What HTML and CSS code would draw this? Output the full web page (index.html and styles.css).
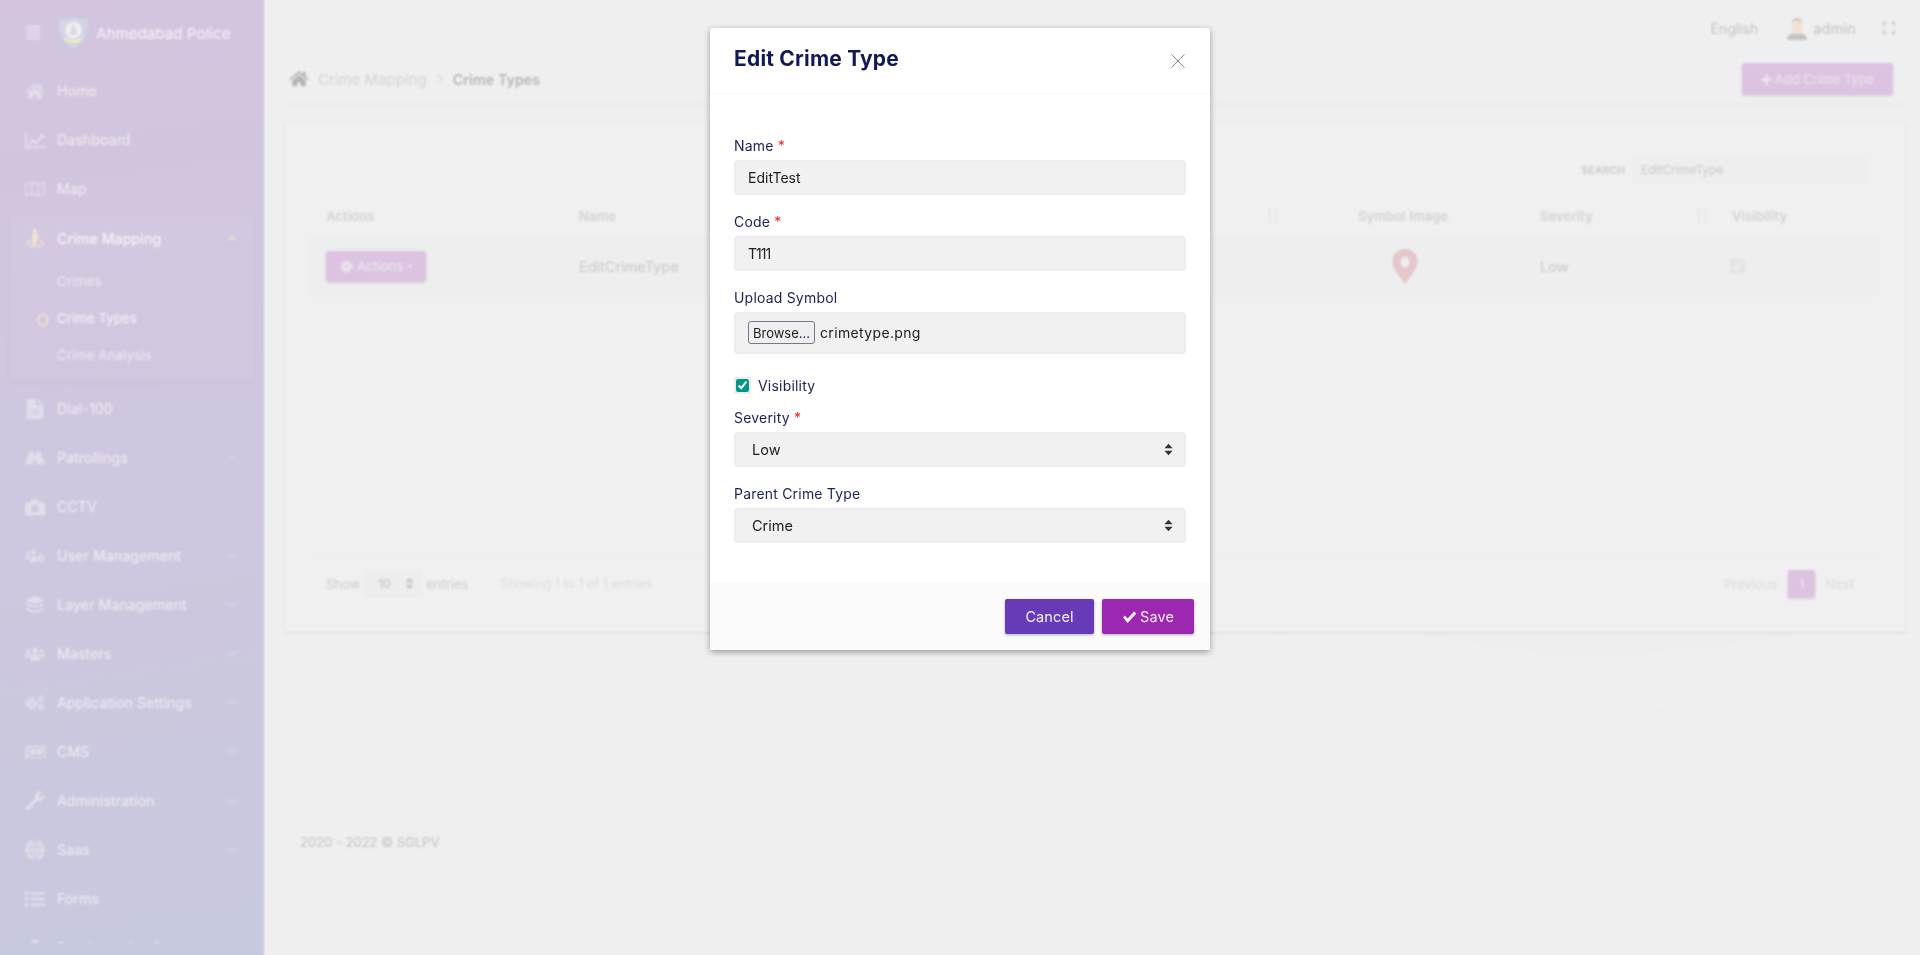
FILE: index.html
```html
<!DOCTYPE html>
<html lang="en">
<head>
<meta charset="utf-8">
<title>Crime Types</title>
<link rel="stylesheet" href="styles.css">
</head>
<body>
<svg class="defs" width="0" height="0" aria-hidden="true">
  <symbol id="i-home" viewBox="0 0 24 20"><path d="M.6 10.6 12 1l4.6 3.9V2h3.2v5.6l3.6 3-1.3 1.6L12 4 1.900 12.200z"/><path d="M4 12.300 12 5.700l8 6.600V19.400h-5.800v-5h-4.400v5H4z"/></symbol>
  <symbol id="i-chart" viewBox="0 0 24 20"><path d="M0 1h2v16.500h22V20H0z"/><path d="M4 14.500 9 8.500l4 3.500 6-7-2-2h6v6l-2-2-8 9-4-3.500-3.500 4z"/></symbol>
  <symbol id="i-map" viewBox="0 0 27 20"><path d="M1 3.500 9 1l9 2.500L26 1v15.500L18 19l-9-2.500L1 19z" fill="none" stroke="currentColor" stroke-width="1.800"/><path d="M9 1v15.500M18 3.500V19" stroke="currentColor" stroke-width="1.800"/></symbol>
  <symbol id="i-street" viewBox="0 0 24 22"><circle cx="12" cy="2.800" r="2.800"/><path d="M8.500 7a2 2 0 0 1 2-1.500h3a2 2 0 0 1 2 1.500v6h-1.500v6h-5v-6H8.500z"/><path d="M7 13.500C3 14.300 1 15.800 1 17.500 1 20 6 22 12 22s11-2 11-4.500c0-1.700-2-3.200-6-4v1.600c2.500.6 4 1.400 4 2.400 0 1.500-4 2.800-9 2.800s-9-1.300-9-2.800c0-1 1.500-1.800 4-2.400z"/></symbol>
  <symbol id="i-file" viewBox="0 0 18 22"><path d="M0 0h10v7h8v15H0zM12 0l6 5h-6z"/><path d="M4 11h10M4 14h10M4 17h10" stroke="#d0c8de" stroke-width="1"/></symbol>
  <symbol id="i-road" viewBox="0 0 27 17"><path d="M6 0h5.800l-.4 4h4.200l-.4-4H21l6 17H15.800l-.3-5h-4l-.3 5H0z"/></symbol>
  <symbol id="i-camera" viewBox="0 0 24 20"><path fill-rule="evenodd" d="M0 5h6.500L8.500 1h7l2 4H24v15H0zM12 7.500a4.500 4.500 0 1 0 0 9 4.500 4.500 0 0 0 0-9z"/></symbol>
  <symbol id="i-ucog" viewBox="0 0 30 20"><circle cx="5" cy="6" r="2.800"/><circle cx="13" cy="4.500" r="3.800"/><path d="M0 14c0-3 2-4.500 5-4.500 1 0 2 .2 2.500.6C6.500 11 6 12 6 14zM7 17c0-5 2.500-7.500 6-7.500 2 0 3.500.6 4.500 2v7.500H7z"/><circle cx="23.500" cy="13.500" r="3.200" fill="none" stroke="currentColor" stroke-width="2.600"/><circle cx="23.500" cy="13.500" r="5.300" fill="none" stroke="currentColor" stroke-width="2" stroke-dasharray="2.600 2.600"/></symbol>
  <symbol id="i-layers" viewBox="0 0 24 22"><path d="M12 0 24 5 12 10 0 5z"/><path d="m0 10 3-1.300 9 3.800 9-3.800 3 1.300-12 5z"/><path d="m0 16 3-1.300 9 3.800 9-3.800 3 1.300-12 5z"/></symbol>
  <symbol id="i-users" viewBox="0 0 30 20"><circle cx="15" cy="5" r="4.500"/><circle cx="5" cy="6" r="3"/><circle cx="25" cy="6" r="3"/><path d="M8 20v-4.500C8 12 10.500 10.500 15 10.500s7 1.500 7 5V20z"/><path d="M0 15v-2c0-2 2-3.200 5-3.200 1.500 0 2.500.3 3.500 1C7 12 6.500 13.200 6.500 15zM30 15v-2c0-2-2-3.200-5-3.200-1.500 0-2.500.3-3.500 1 1.500 1.200 2 2.400 2 4.200z"/></symbol>
  <symbol id="i-cogs" viewBox="0 0 30 22"><circle cx="10" cy="11.500" r="4.500" fill="none" stroke="currentColor" stroke-width="4"/><circle cx="10" cy="11.500" r="8.500" fill="none" stroke="currentColor" stroke-width="3" stroke-dasharray="3.340 3.340"/><circle cx="24" cy="5" r="2.200" fill="none" stroke="currentColor" stroke-width="2"/><circle cx="24" cy="5" r="4" fill="none" stroke="currentColor" stroke-width="1.800" stroke-dasharray="2.100 2.100"/><circle cx="24" cy="17" r="2.200" fill="none" stroke="currentColor" stroke-width="2"/><circle cx="24" cy="17" r="4" fill="none" stroke="currentColor" stroke-width="1.800" stroke-dasharray="2.100 2.100"/></symbol>
  <symbol id="i-news" viewBox="0 0 27 17"><path fill-rule="evenodd" d="M0 3h3V0h24v17H0zM1.500 4.500v11h1.500v-11zM5 2v13.500h20.500V2z"/><path d="M7 4h7.500v8H7zM16 4h7.500v8H16z"/></symbol>
  <symbol id="i-wrench" viewBox="0 0 24 24"><path d="M23.500 6c0 3.600-2.900 6.500-6.500 6.500-.9 0-1.700-.2-2.500-.5L5 22.500a2.500 2.500 0 0 1-3.500-3.500L12 9.500c-.3-.8-.5-1.600-.5-2.500C11.500 3.400 14.400.5 18 .5c1 0 1.800.2 2.600.6L16.500 5l1 2.500 2.500.5 3.200-3.800c.2.500.300 1.200.300 1.800z"/></symbol>
  <symbol id="i-globe" viewBox="0 0 24 24"><circle cx="12" cy="12" r="12"/><path d="M0 8.300h24M0 15.700h24M12 0v24M12 0C5 6 5 18 12 24M12 0c7 6 7 18 0 24" fill="none" stroke="#cac8de" stroke-width="1.300"/></symbol>
  <symbol id="i-list" viewBox="0 0 24 20"><path d="M0 1h4v4H0zM0 8h4v4H0zM0 15h4v4H0zM7 1.500h17v3H7zM7 8.500h17v3H7zM7 15.500h17v3H7z"/></symbol>
  <symbol id="i-puzzle" viewBox="0 0 24 20"><path d="M0 6h8c-1-1-1-6 4-6s5 5 4 6h8v14H0z"/></symbol>
  <symbol id="i-down" viewBox="0 0 12 8"><path d="m1 1.500 5 4.500 5-4.500" fill="none" stroke="currentColor" stroke-width="1.300"/></symbol>
  <symbol id="i-up" viewBox="0 0 12 8"><path d="m1 6.500 5-4.500 5 4.500" fill="none" stroke="currentColor" stroke-width="2"/></symbol>
  <symbol id="i-updown" viewBox="0 0 10 13"><path d="M5 0 9.500 5H.5zM5 13 .5 8h9z"/></symbol>
  <symbol id="i-sort" viewBox="0 0 12 16"><path d="M3 16V1M3 1 .8 3.500M9 0v15M9 15l2.200-2.500" fill="none" stroke="currentColor" stroke-width="1"/></symbol>
  <symbol id="i-gear" viewBox="0 0 20 20"><circle cx="10" cy="10" r="4.500" fill="none" stroke="currentColor" stroke-width="4"/><circle cx="10" cy="10" r="8.300" fill="none" stroke="currentColor" stroke-width="3" stroke-dasharray="3.260 3.260"/></symbol>
  <symbol id="i-plus" viewBox="0 0 12 12"><path d="M4.500 0h3v4.500H12v3H7.500V12h-3V7.500H0v-3h4.500z"/></symbol>
</svg>

<div class="app">
  <aside class="sidebar">
    <div class="brand">
      <span class="burger"><i></i><i></i><i></i><i></i><i></i></span>
      <svg class="logo" viewBox="0 0 32 34" aria-hidden="true">
        <path d="M16 1C11 3 6 3.500 1.500 3c-.5 10-.5 20 14.500 30C30.500 23 31 13 30.500 3 26 3.500 21 3 16 1z" fill="#d8d3e2" stroke="#c2d8ea" stroke-width="1.200"/>
        <circle cx="16" cy="14" r="8.500" fill="#f0eef4"/>
        <path d="M16 7l2.500 5 1.500 7h-8l1.500-7z" fill="#dcd8e3"/>
        <path d="M6 21c4 4 16 4 20 0l-1 4c-5 3-13 3-18 0z" fill="#f0ecc4"/>
      </svg>
      <span class="brand-name">Ahmedabad Police</span>
    </div>
    <nav class="nav">
      <a class="nav-item"><svg class="nav-ic"><use href="#i-home"/></svg><span>Home</span></a>
      <a class="nav-item"><svg class="nav-ic"><use href="#i-chart"/></svg><span>Dashboard</span></a>
      <a class="nav-item"><svg class="nav-ic"><use href="#i-map"/></svg><span>Map</span></a>
      <div class="nav-group">
        <a class="nav-item active"><svg class="nav-ic"><use href="#i-street"/></svg><span>Crime Mapping</span><svg class="chev"><use href="#i-up"/></svg></a>
        <div class="sub">
          <a class="sub-item">Crimes</a>
          <a class="sub-item current">Crime Types</a>
          <a class="sub-item">Crime Analysis</a>
        </div>
      </div>
      <a class="nav-item"><svg class="nav-ic"><use href="#i-file"/></svg><span>Dial-100</span></a>
      <a class="nav-item"><svg class="nav-ic"><use href="#i-road"/></svg><span>Patrollings</span><svg class="chev"><use href="#i-down"/></svg></a>
      <a class="nav-item"><svg class="nav-ic"><use href="#i-camera"/></svg><span>CCTV</span></a>
      <a class="nav-item"><svg class="nav-ic"><use href="#i-ucog"/></svg><span>User Management</span><svg class="chev"><use href="#i-down"/></svg></a>
      <a class="nav-item"><svg class="nav-ic"><use href="#i-layers"/></svg><span>Layer Management</span><svg class="chev"><use href="#i-down"/></svg></a>
      <a class="nav-item"><svg class="nav-ic"><use href="#i-users"/></svg><span>Masters</span><svg class="chev"><use href="#i-down"/></svg></a>
      <a class="nav-item"><svg class="nav-ic"><use href="#i-cogs"/></svg><span>Application Settings</span><svg class="chev"><use href="#i-down"/></svg></a>
      <a class="nav-item"><svg class="nav-ic"><use href="#i-news"/></svg><span>CMS</span><svg class="chev"><use href="#i-down"/></svg></a>
      <a class="nav-item"><svg class="nav-ic"><use href="#i-wrench"/></svg><span>Administration</span><svg class="chev"><use href="#i-down"/></svg></a>
      <a class="nav-item"><svg class="nav-ic"><use href="#i-globe"/></svg><span>Saas</span><svg class="chev"><use href="#i-down"/></svg></a>
      <a class="nav-item"><svg class="nav-ic"><use href="#i-list"/></svg><span>Forms</span></a>
      <a class="nav-item"><svg class="nav-ic"><use href="#i-puzzle"/></svg><span>Database Configurator</span></a>
    </nav>
  </aside>

  <main class="main">
    <svg class="swoosh" viewBox="0 0 680 140" aria-hidden="true">
      <path d="M180 0C260 18 320 24 350 24S470 18 560 0z" fill="#eeeeee"/>
      <path d="M20 0C180 60 290 80 350 80S520 60 680 0" fill="none" stroke="#f1f1f1" stroke-width="2"/>
    </svg>
    <header class="topbar">
      <span class="lang">English</span>
      <span class="user">
        <svg class="avatar" viewBox="0 0 20 24" aria-hidden="true">
          <path d="M0 24c0-5 4-7 10-7s10 2 10 7z" fill="#c3c3c3"/>
          <path d="M6 17c-1-5-2-7-1-12C6 1 14 1 15 5c1 5 0 7-1 12-1 2-7 2-8 0z" fill="#eee2d4"/>
          <path d="M5 6c0-5 10-5 10 0-3-2-7-2-10 0z" fill="#cfc3b3"/>
        </svg>
        <span>admin</span>
      </span>
      <svg class="fullscreen" viewBox="0 0 12 12" aria-hidden="true"><path d="M.6 4V.6H4M8 .6h3.400V4M11.400 8v3.400H8M4 11.400H.6V8" fill="none" stroke="currentColor" stroke-width="1.300"/></svg>
    </header>

    <div class="pagebar">
      <div class="crumbs">
        <svg class="crumb-home"><use href="#i-home"/></svg>
        <span class="crumb">Crime Mapping</span>
        <svg class="crumb-sep" viewBox="0 0 8 12" aria-hidden="true"><path d="m1 1 6 5-6 5" fill="none" stroke="currentColor"/></svg>
        <strong class="crumb-now">Crime Types</strong>
      </div>
      <button class="btn-add" type="button"><svg class="plus"><use href="#i-plus"/></svg>Add Crime Type</button>
    </div>

    <section class="card">
      <div class="searchrow">
        <label class="search-label">SEARCH</label>
        <span class="search-box">EditCrimeType</span>
      </div>
      <div class="table-wrap">
        <table class="table">
          <colgroup>
            <col class="c-actions"><col class="c-name"><col class="c-code"><col class="c-symbol"><col class="c-sev"><col class="c-vis">
          </colgroup>
          <thead>
            <tr>
              <th>Actions</th>
              <th>Name</th>
              <th>Code<svg class="sort far"><use href="#i-sort"/></svg></th>
              <th>Symbol Image</th>
              <th>Severity<svg class="sort"><use href="#i-sort"/></svg></th>
              <th>Visibility</th>
            </tr>
          </thead>
          <tbody>
            <tr>
              <td><button class="btn-actions" type="button"><svg class="gear"><use href="#i-gear"/></svg> Actions<i class="caret"></i></button></td>
              <td>EditCrimeType</td>
              <td>T111</td>
              <td class="pin-cell"><svg class="pin" viewBox="0 0 26 36" aria-hidden="true"><path fill-rule="evenodd" d="M13 0C5.800 0 0 5.600 0 12.500 0 20 9 30 13 36c4-6 13-16 13-23.500C26 5.600 20.200 0 13 0zm0 8a4.600 5.400 0 1 1 0 10.800A4.600 5.400 0 0 1 13 8z"/></svg></td>
              <td>Low</td>
              <td><span class="tick"><svg viewBox="0 0 12 12" aria-hidden="true"><path d="m3 6 2.200 2.500L9.500 3" fill="none" stroke="#f6f6f6" stroke-width="1"/></svg></span></td>
            </tr>
          </tbody>
        </table>
      </div>
      <div class="tablefoot">
        <span class="show">Show</span>
        <span class="len">10<svg class="len-ic"><use href="#i-updown"/></svg></span>
        <span class="show">entries</span>
        <span class="info">Showing 1 to 1 of 1 entries</span>
        <div class="pager">
          <span>Previous</span>
          <span class="page-now">1</span>
          <span>Next</span>
        </div>
      </div>
    </section>

    <footer class="foot">2020 - 2022 © SGLPV</footer>
  </main>
</div>

<div class="backdrop">
  <form class="modal">
    <div class="modal-head">
      <h2>Edit Crime Type</h2>
      <button class="close" type="button" aria-label="Close"><svg viewBox="0 0 14 14" aria-hidden="true"><path d="m.5.5 13 13m0-13-13 13" fill="none" stroke="currentColor"/></svg></button>
    </div>
    <div class="modal-body">
      <div class="field">
        <label>Name <em>*</em></label>
        <input class="control" type="text" value="EditTest">
      </div>
      <div class="field">
        <label>Code <em>*</em></label>
        <input class="control tight" type="text" value="T111">
      </div>
      <div class="field">
        <label>Upload Symbol</label>
        <div class="control file"><button class="browse" type="button">Browse...</button><span>crimetype.png</span></div>
      </div>
      <label class="check"><input type="checkbox" checked> Visibility</label>
      <div class="field">
        <label>Severity <em>*</em></label>
        <div class="selectwrap">
          <select class="control sel"><option>Low</option></select>
          <svg class="sel-ic"><use href="#i-updown"/></svg>
        </div>
      </div>
      <div class="field last">
        <label>Parent Crime Type</label>
        <div class="selectwrap">
          <select class="control sel"><option>Crime</option></select>
          <svg class="sel-ic"><use href="#i-updown"/></svg>
        </div>
      </div>
    </div>
    <div class="modal-foot">
      <button class="btn cancel" type="button">Cancel</button>
      <button class="btn save" type="button"><svg viewBox="0 0 16 13" aria-hidden="true"><path d="M1 7l2-2 3 3 7-7.500 2.400 2.200L6 13z" fill="currentColor"/></svg>Save</button>
    </div>
  </form>
</div>
</body>
</html>
```

FILE: styles.css
```css
* { box-sizing: border-box; }
html, body { margin: 0; height: 955px; overflow: hidden; }
body {
  font-family: Inter, "Noto Sans", "Liberation Sans", sans-serif;
  font-size: 14px;
  background: #efefef;
  color: #c6c6c6;
}
.defs { position: absolute; }
svg { fill: currentColor; display: block; }

.app { display: flex; height: 955px; }

/* sidebar */
.sidebar {
  width: 264px;
  flex: none;
  height: 955px;
  background: linear-gradient(172deg, #d3c5de 0%, #cfc7df 50%, #c7c9de 100%);
  color: #e6e0ec;
  display: flex;
  flex-direction: column;
}
.brand { height: 66px; flex: none; display: flex; align-items: center; padding-left: 26px; }
.burger { width: 14px; display: flex; flex-direction: column; gap: 2px; margin-right: 18px; margin-top: -1px; }
.burger i { display: block; height: 1px; background: #f5f1f8; }
.logo { width: 31px; height: 34px; margin-right: 7px; margin-top: -1px; }
.brand-name { font-size: 15px; color: #f5f2f9; letter-spacing: .1px; }
.nav { height: 877px; overflow: hidden; flex: none; }
.nav-item {
  display: flex;
  align-items: center;
  height: 49px;
  padding-left: 25px;
  font-size: 14px;
  letter-spacing: .15px;
  color: #f0ecf5;
}
.nav-ic { width: 20px; height: 20px; margin-right: 12px; flex: none; color: #e2ddeb; }
.nav-item > span { flex: 1; }
.chev { width: 10px; height: 7px; margin-right: 27px; color: #d8d5e6; flex: none; }
.nav-group {
  margin: 3px 10px;
  height: 165px;
  background: rgba(255,255,255,.04);
  box-shadow: 0 1px 4px rgba(120,100,160,.08);
  border-radius: 2px;
}
.nav-group .nav-item { height: 44px; padding-left: 15px; color: #f6f3fa; font-weight: 500; }
.nav-item.active .nav-ic { color: #f0e1cf; }
.nav-item.active .chev { color: #f0e1cf; margin-right: 17px; }
.sub { padding-top: 3px; }
.sub-item { display: block; height: 37px; line-height: 37px; padding-left: 47px; font-size: 13px; letter-spacing: .2px; color: #ebe6f1; position: relative; }
.sub-item.current { color: #f6f3fa; }
.sub-item.current::before {
  content: "";
  position: absolute;
  left: 27px;
  top: 14px;
  width: 8px;
  height: 8px;
  border: 2px solid #f0e1cf;
  border-radius: 50%;
}

/* main */
.main { flex: 1; min-width: 0; padding: 0 15px 0 21px; position: relative; display: flex; flex-direction: column; }
.swoosh { position: absolute; left: 976px; top: 632px; width: 680px; height: 140px; }
.topbar { height: 56px; flex: none; display: flex; align-items: center; justify-content: flex-end; position: relative; }
.lang { font-size: 14px; margin-right: 29px; color: #c5c5c5; }
.user { display: flex; align-items: center; color: #c5c5c5; margin-right: 27px; font-size: 14.500px; letter-spacing: .2px; }
.avatar { width: 20px; height: 24px; margin-right: 6px; }
.fullscreen { width: 12px; height: 12px; color: #c0c0c0; margin-right: 10px; }

.pagebar { height: 49px; flex: none; display: flex; justify-content: space-between; padding: 7px 12px 10px 4px; border-bottom: 1px solid #e8e8e8; position: relative; }
.crumbs { display: flex; align-items: center; padding-top: 1px; }
.crumb-home { width: 20px; height: 17px; color: #b3b3b3; margin-right: 9px; margin-top: -2px; }
.crumb { color: #d6d6d6; font-size: 15px; }
.crumb-sep { width: 8px; height: 12px; color: #d4d4d4; margin: 0 9px; }
.crumb-now { color: #b7b7b7; font-size: 14px; font-weight: 600; letter-spacing: .2px; }
.btn-add {
  width: 151px;
  height: 32px;
  border: 0;
  border-radius: 3px;
  background: #dcc3e1;
  color: #ebe3ee;
  font: 13px Inter, sans-serif;
  box-shadow: 0 1px 3px rgba(0,0,0,.12);
  padding: 0;
  display: flex;
  align-items: center;
  justify-content: center;
}
.plus { width: 11px; height: 11px; margin-right: 3px; }

.card {
  margin-top: 16px;
  height: 511px;
  flex: none;
  background: #f0f0f0;
  border-radius: 2px;
  box-shadow: 0 1px 3px rgba(0,0,0,.1);
  padding: 36px 25px 0;
  position: relative;
}
.searchrow { height: 26px; display: flex; align-items: center; justify-content: flex-end; padding-right: 13px; }
.search-label { font-size: 10.500px; font-weight: 700; color: #cfcfcf; margin-right: 6px; }
.search-box { width: 236px; height: 26px; line-height: 26px; padding-left: 10px; background: #eeeeee; font-size: 12px; color: #cbcbcb; border-radius: 2px; }

.table-wrap { margin-top: 14px; height: 360px; border-bottom: 1px solid #ededed; }
.table { width: 100%; border-collapse: collapse; table-layout: fixed; }
.c-actions { width: 253px; }
.c-name { width: 390px; }
.c-code { width: 389px; }
.c-symbol { width: 182px; }
.c-sev { width: 192px; }
.c-vis { width: 164px; }
.table th { height: 38px; padding: 0 0 0 16px; text-align: left; font-size: 13px; font-weight: 600; letter-spacing: .1px; color: #d4d4d4; position: relative; }
.table td { height: 62px; padding: 0 0 0 16px; background: #eeeeee; font-size: 14.500px; color: #cbcbcb; }
.sort { position: absolute; right: 8px; top: 11px; width: 12px; height: 16px; color: #e0e0e0; fill: none; }
.sort.far { right: 63px; }
.btn-actions {
  display: flex;
  align-items: center;
  width: 100px;
  height: 31px;
  padding: 0 0 0 14px;
  border: 0;
  border-radius: 3px;
  background: #dcc3e1;
  color: #efe8f2;
  font: 13px Inter, sans-serif;
  box-shadow: 0 1px 3px rgba(0,0,0,.12);
}
.gear { width: 13px; height: 13px; margin-right: 4px; }
.caret { width: 0; height: 0; margin-left: 4px; border: 3px solid transparent; border-top-color: #efe8f2; border-bottom: 0; }
.pin { width: 26px; height: 35px; color: #e4c6cb; margin-left: 34px; }
.tick { display: block; width: 15px; height: 15px; background: #e4e4e4; border-radius: 2px; margin-left: -2px; }

.tablefoot { margin-top: 12px; height: 29px; display: flex; align-items: center; padding: 0 26px 0 16px; }
.show { font-size: 13px; color: #cfcfcf; }
.len { width: 59px; height: 29px; margin: 0 3px 0 4px; padding-left: 14px; background: #ededed; border-radius: 3px; display: flex; align-items: center; font-size: 12px; color: #c2c2c2; }
.len-ic { width: 9px; height: 13px; margin-left: 14px; color: #c5c5c5; }
.info { margin-left: 32px; font-size: 12.500px; color: #dedede; }
.pager { margin-left: auto; display: flex; align-items: center; font-size: 13px; color: #dcdcdc; }
.page-now { width: 27px; height: 28px; margin: 0 10px 0 11px; line-height: 28px; text-align: center; background: #dcc3e1; color: #efe8f2; border-radius: 2px; box-shadow: 0 1px 3px rgba(0,0,0,.12); }

.foot { margin-top: 200px; padding-left: 15px; height: 20px; line-height: 20px; font-size: 13px; color: #c4c4c4; position: relative; }

/* modal */
.backdrop {
  position: fixed;
  inset: 0;
  backdrop-filter: blur(.8px);
}
.modal {
  position: absolute;
  left: 710px;
  top: 28px;
  width: 500px;
  height: 622px;
  background: #ffffff;
  border-radius: 3px;
  box-shadow: 0 2px 6px rgba(0,0,0,.38);
  display: flex;
  flex-direction: column;
  color: #1b2158;
}
.modal-head { height: 66px; flex: none; padding: 17px 25px 0 24px; display: flex; justify-content: space-between; border-bottom: 1px solid #f8f8f8; }
.modal-head h2 { margin: 0; font-size: 21px; line-height: 28px; font-weight: 700; color: #111a55; letter-spacing: .2px; }
.close { border: 0; background: none; padding: 0; width: 14px; height: 14px; margin-top: 9px; color: #8a8a8a; }
.close svg { width: 14px; height: 14px; }
.modal-body { flex: 1; padding: 41px 24px 0; }
.field { margin-bottom: 16px; }
.field.last { margin-bottom: 0; }
.field > label { display: block; height: 25px; line-height: 21px; font-size: 14px; letter-spacing: .2px; }
.field em { color: #ff1a1a; font-style: normal; }
.control {
  display: block;
  width: 100%;
  height: 35px;
  border: 2px solid #ededed;
  border-radius: 4px;
  background: #f1f1f1;
  padding: 0 12px;
  font: 14px Inter, sans-serif;
  color: #202020;
  outline: 0;
}
.tight { letter-spacing: -1px; }
.file { height: 42px; display: flex; align-items: center; }
.file span { margin-left: 5px; letter-spacing: .35px; margin-top: -1px; }
.browse {
  width: 67px;
  height: 23px;
  padding: 0;
  border: 1px solid #77778a;
  border-radius: 3px;
  background: #efeff2;
  color: #1d1d1d;
  font: 13px Inter, sans-serif;
  margin-top: -1px;
}
.check { display: flex; align-items: center; height: 22px; font-size: 14px; letter-spacing: .2px; margin-top: 20px; margin-bottom: 11px; }
.check input {
  width: 13px;
  height: 13px;
  margin: 0 9px 0 2px;
  accent-color: #009688;
  box-shadow: 0 0 0 2px #ececec;
  border-radius: 3px;
}
.selectwrap { position: relative; }
.sel { appearance: none; padding-left: 16px; font-size: 14.500px; }
.sel-ic { position: absolute; right: 13px; top: 11px; width: 9px; height: 13px; color: #333; pointer-events: none; }
.modal-foot {
  height: 67px;
  flex: none;
  background: #fbfbfb;
  display: flex;
  justify-content: flex-end;
  align-items: flex-start;
  gap: 8px;
  padding: 16px 16px 0 0;
}
.btn {
  height: 35px;
  border: 0;
  border-radius: 2px;
  color: #f6f0fa;
  font: 14.500px Inter, sans-serif;
  letter-spacing: .1px;
  box-shadow: 0 1px 3px rgba(0,0,0,.3);
  padding: 0;
  display: flex;
  align-items: center;
  justify-content: center;
}
.cancel { width: 89px; background: #673ab7; }
.save { width: 92px; background: #9c27b0; }
.save svg { width: 15px; height: 12px; margin-right: 3px; }
```
